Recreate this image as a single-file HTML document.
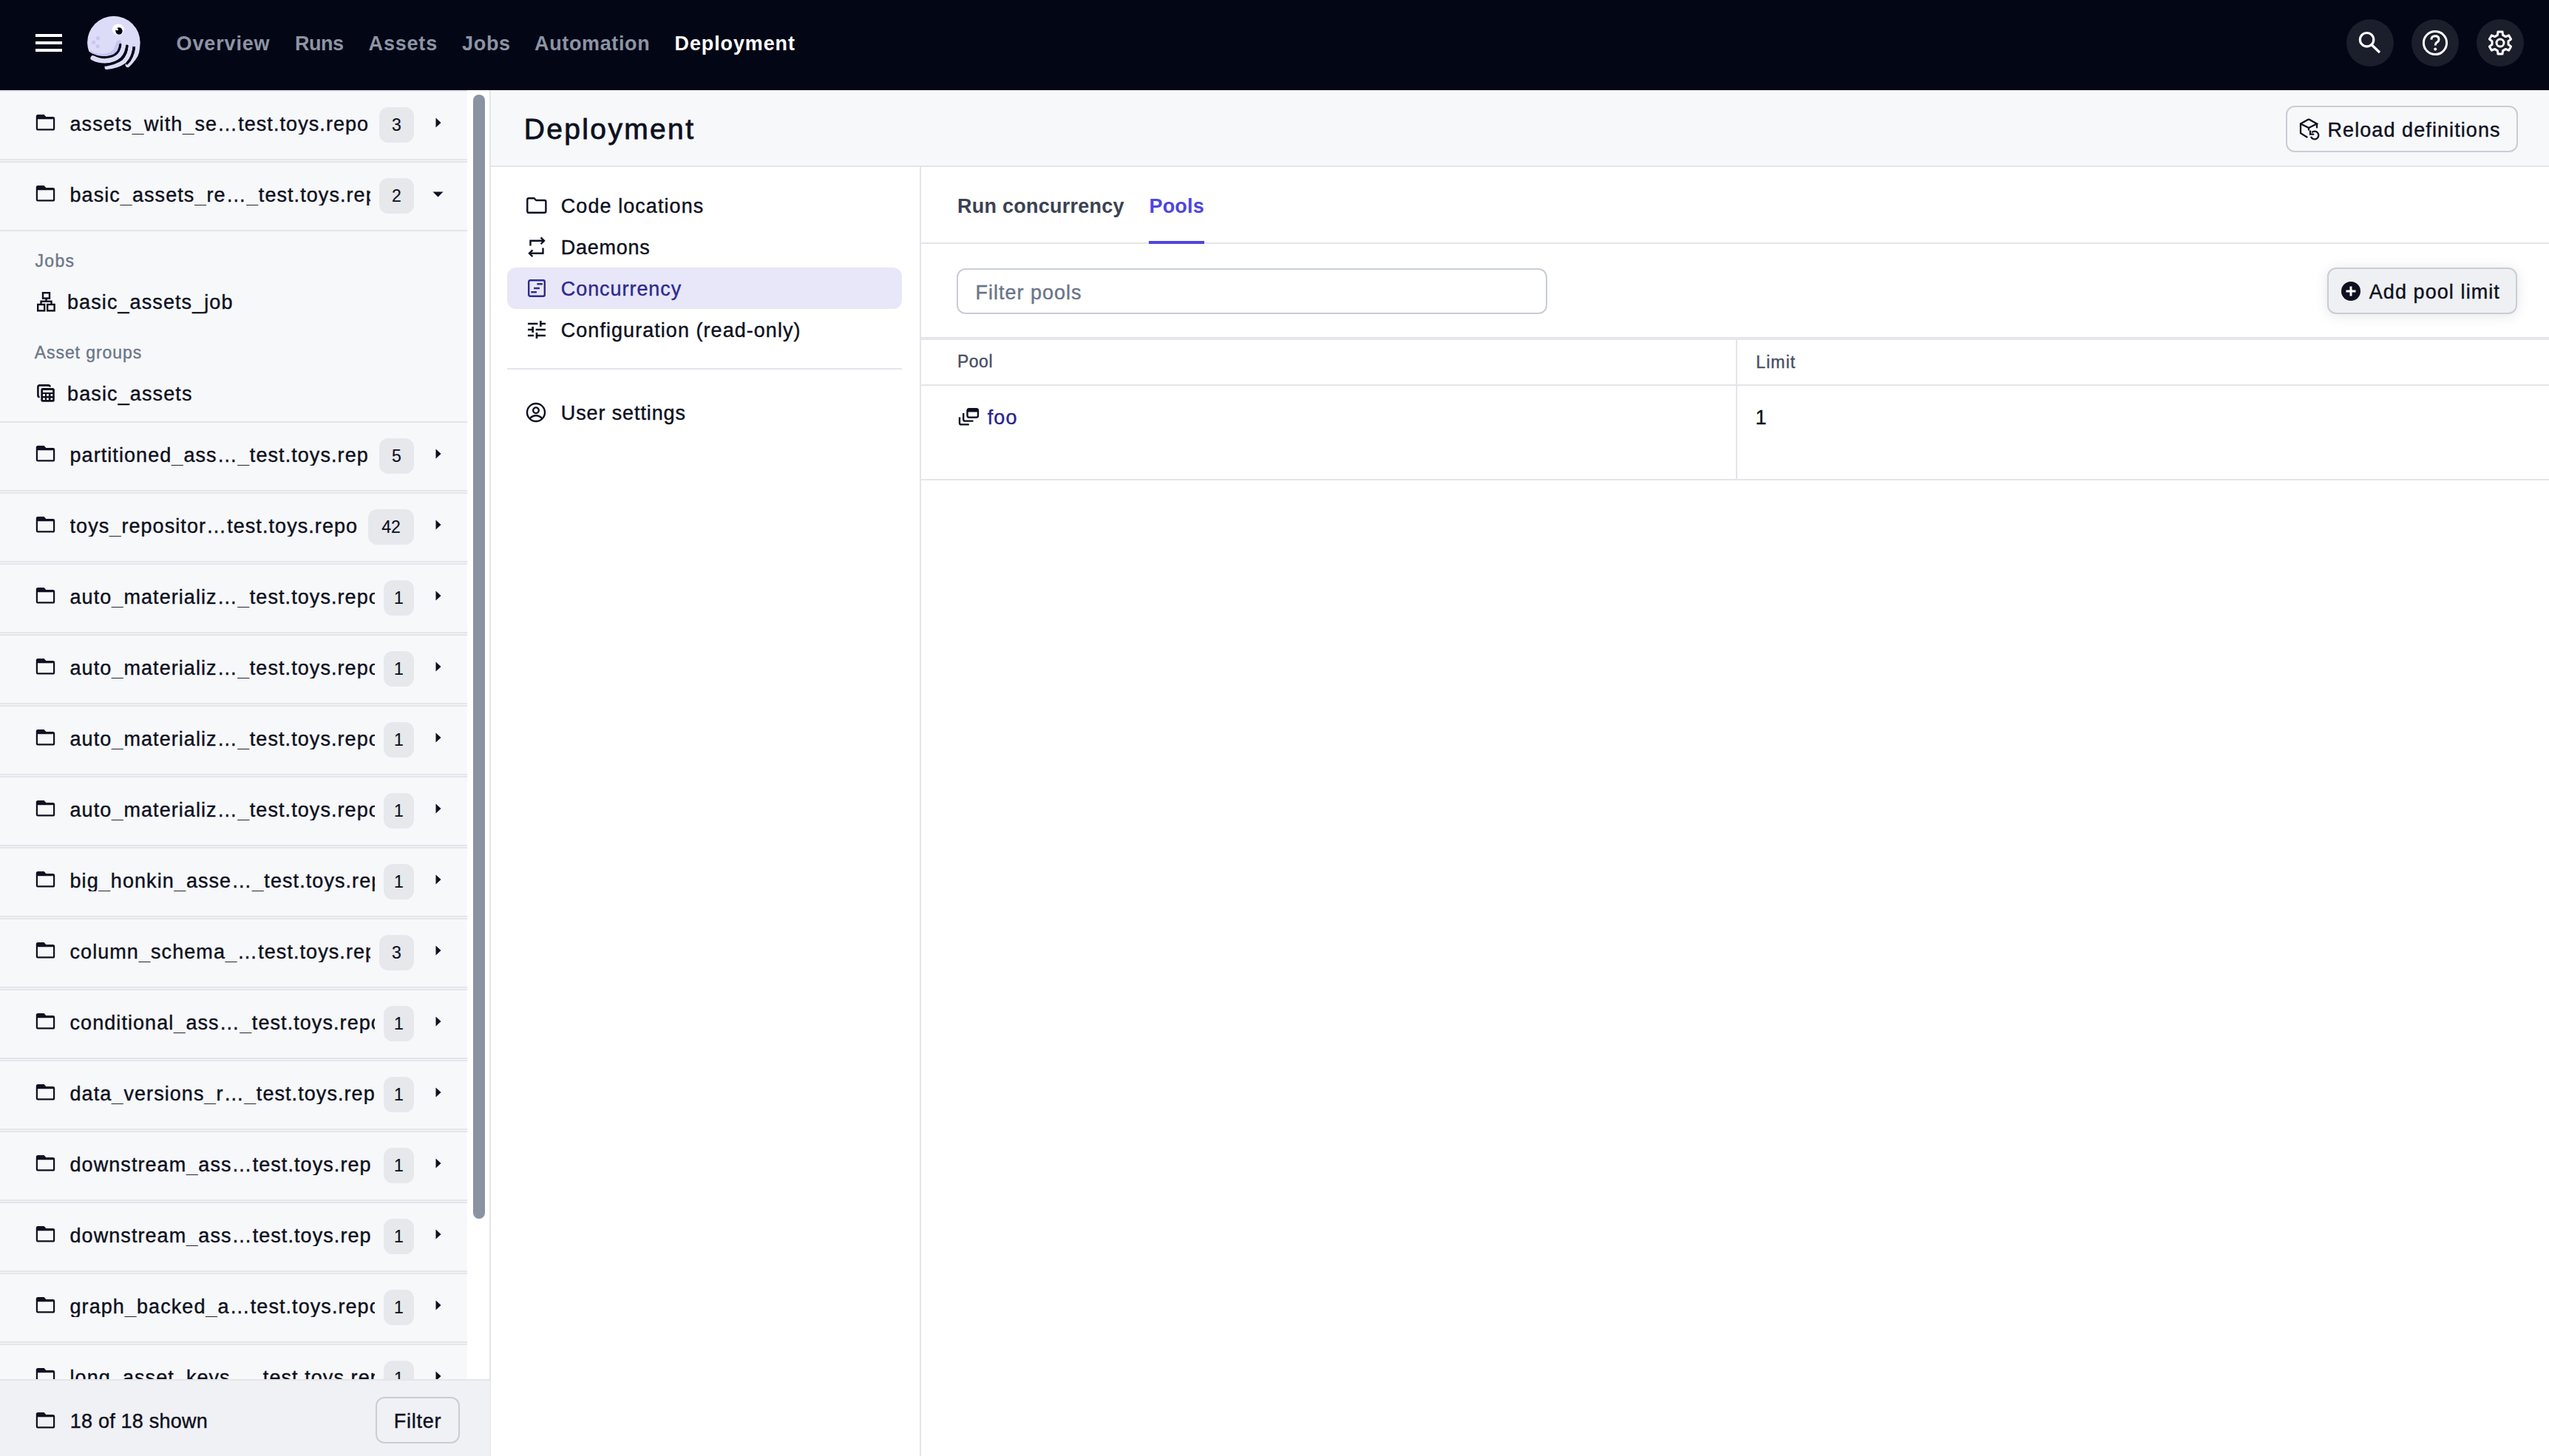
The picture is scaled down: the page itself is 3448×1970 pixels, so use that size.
<!DOCTYPE html><html><head><meta charset='utf-8'><style>
html,body{margin:0;padding:0;width:3448px;height:1970px;overflow:hidden;background:#fff;font-family:"Liberation Sans", sans-serif;}
.t{position:absolute;white-space:pre;-webkit-text-stroke:0.4px currentColor;}
.ic{position:absolute;display:block;overflow:visible;}
.b{position:absolute;}
</style></head><body>
<div class='b' style='left:0;top:0;width:3448px;height:122px;background:#030615'></div>
<div class='b' style='left:48px;top:46px;width:36px;height:4px;background:#fff'></div>
<div class='b' style='left:48px;top:56px;width:36px;height:4px;background:#fff'></div>
<div class='b' style='left:48px;top:66px;width:36px;height:4px;background:#fff'></div>
<svg class='ic' style='left:112px;top:16px' width='84' height='84' viewBox='0 0 84 84'>
<defs><clipPath id='hc'><path d='M0 0H84V47 L69.2 47 L60 45 L50.8 43.5 Q49.5 52 43 56.5 Q35 60.5 26 59.8 Q19 59.2 12 56 L0 48Z'/></clipPath></defs>
<circle cx='41.85' cy='41.55' r='35.75' fill='#dddcf8' clip-path='url(#hc)'/>
<path d='M9 51 Q16 57 26 57 Q37 57 42 50 Q44 44 46 40 Q48 37.5 51 38.5 Q53 40 52 45 Q49 57 38 62 Q26 66 14 59Z' fill='#c7c4f2' clip-path='url(#hc)'/>
<circle cx='20.5' cy='35.5' r='2.6' fill='#c9c6f3'/><circle cx='14.7' cy='41.3' r='2.6' fill='#c9c6f3'/><circle cx='20.2' cy='46.7' r='2.6' fill='#c9c6f3'/>
<ellipse cx='47.9' cy='23.8' rx='8' ry='7.3' fill='#fff'/><circle cx='49' cy='26' r='4.7' fill='#030615'/><circle cx='46.4' cy='23.8' r='1.5' fill='#fff'/>
<path d='M55.5 42 Q54.5 54 49 59.4 Q42 66 30 66.4 Q21 66.4 13.6 62.4' stroke='#dddcf8' stroke-width='6.4' fill='none' stroke-linecap='round'/>
<path d='M64.6 44 Q64.5 58 56 67 Q46 74 32.6 75' stroke='#dddcf8' stroke-width='6.2' fill='none' stroke-linecap='round'/>
<path d='M74 40 Q75 56 69.2 62.3 Q65 68 60.8 72' stroke='#dddcf8' stroke-width='6.2' fill='none' stroke-linecap='round'/>
<path d='M50.8 44.4 Q49.5 54 44 57.4' stroke='#030615' stroke-width='3.2' fill='none' stroke-linecap='round'/>
<path d='M60 46.2 Q59 58 52 64.5 Q44 70 31 72.1' stroke='#030615' stroke-width='3.2' fill='none' stroke-linecap='round'/>
<path d='M69.2 48.5 Q68 62 59.8 69.8' stroke='#030615' stroke-width='3.2' fill='none' stroke-linecap='round'/>
</svg>
<div class='b' style='left:3174px;top:26px;width:64px;height:64px;border-radius:50%;background:#1b1e2b'></div>
<div class='b' style='left:3262px;top:26px;width:64px;height:64px;border-radius:50%;background:#1b1e2b'></div>
<div class='b' style='left:3350px;top:26px;width:64px;height:64px;border-radius:50%;background:#1b1e2b'></div>
<svg class='ic' style='left:3186px;top:38px' width='40' height='40' viewBox='0 0 40 40'><circle cx='15.6' cy='15.7' r='9.2' stroke='#fff' stroke-width='3.2' fill='none'/><path d='M22.5 23 L33 33' stroke='#fff' stroke-width='3.4'/></svg>
<svg class='ic' style='left:3274px;top:38px' width='40' height='40' viewBox='0 0 40 40'><circle cx='20' cy='20' r='15.6' stroke='#fff' stroke-width='3' fill='none'/><path d='M14.8 15.6 Q15 10.8 20 10.8 Q25 10.8 25 15.2 Q25 18 22 19.6 Q20.2 20.8 20.2 23.4' stroke='#fff' stroke-width='3' fill='none'/><circle cx='20.2' cy='28.4' r='2' fill='#fff'/></svg>
<svg class='ic' style='left:3362px;top:38px' width='40' height='40' viewBox='0 0 40 40'><path d='M16.43 9.38 L16.96 4.90 L23.04 4.90 L23.57 9.38 L27.41 11.60 L31.55 9.82 L34.60 15.09 L30.98 17.79 L30.98 22.21 L34.60 24.91 L31.55 30.18 L27.41 28.40 L23.57 30.62 L23.04 35.10 L16.96 35.10 L16.43 30.62 L12.59 28.40 L8.45 30.18 L5.40 24.91 L9.02 22.21 L9.02 17.79 L5.40 15.09 L8.45 9.82 L12.59 11.60Z' stroke='#fff' stroke-width='3' fill='none' stroke-linejoin='round'/><circle cx='20' cy='20' r='5' stroke='#fff' stroke-width='3' fill='none'/></svg>
<div class='b' style='left:0;top:122px;width:632px;height:1848px;background:#f7f8fa'></div>
<div class='b' style='left:0;top:122px;width:632px;height:2px;background:#e3e5ea'></div>
<div class='b' style='left:662px;top:122px;width:2px;height:1848px;background:#e3e5ea'></div>
<div class='b' style='left:640px;top:128px;width:16px;height:1521px;border-radius:8px;background:#8a93a2'></div>
<div class='b' style='left:0px;top:215px;width:632px;height:2px;background:#e3e5ea'></div><svg class='ic' style='left:48px;top:155px' width='27' height='22' viewBox='0 0 27 22'><path fill-rule='evenodd' fill='#0d1020' d='M0.8 2.6Q0.8 0 3.2 0H11.6L14.2 2.9H23.6Q26.2 2.9 26.2 5.4V19.2Q26.2 21.6 23.6 21.6H3.2Q0.8 21.6 0.8 19.2ZM3 6.2V19.2H24V6.2Z'/></svg><div class='t' style='left:94.5px;top:155.04px;width:406.5px;overflow:hidden;font-size:27px;line-height:27px;color:#0d1020;letter-spacing:1.07px'>assets_with_se…test.toys.repo</div><div class='b' style='left:513px;top:145px;width:47px;height:48px;border-radius:12px;background:#e7e8ec'></div><div class='t' style='left:513px;width:47px;text-align:center;top:158.43px;font-size:23px;line-height:23px;color:#0d1020;-webkit-text-stroke:0.2px currentColor'>3</div><svg class='ic' style='left:589px;top:159px' width='8' height='14' viewBox='0 0 8 14'><path d='M0.5 0.5L7.5 7L0.5 13.5Z' fill='#0d1020'/></svg><div class='b' style='left:0px;top:218px;width:632px;height:2px;background:#e3e5ea'></div><div class='b' style='left:0px;top:311px;width:632px;height:2px;background:#e3e5ea'></div><svg class='ic' style='left:48px;top:251px' width='27' height='22' viewBox='0 0 27 22'><path fill-rule='evenodd' fill='#0d1020' d='M0.8 2.6Q0.8 0 3.2 0H11.6L14.2 2.9H23.6Q26.2 2.9 26.2 5.4V19.2Q26.2 21.6 23.6 21.6H3.2Q0.8 21.6 0.8 19.2ZM3 6.2V19.2H24V6.2Z'/></svg><div class='t' style='left:94.5px;top:251.04px;width:406.5px;overflow:hidden;font-size:27px;line-height:27px;color:#0d1020;letter-spacing:1.07px'>basic_assets_re…_test.toys.repo</div><div class='b' style='left:513px;top:241px;width:47px;height:48px;border-radius:12px;background:#e7e8ec'></div><div class='t' style='left:513px;width:47px;text-align:center;top:254.43px;font-size:23px;line-height:23px;color:#0d1020;-webkit-text-stroke:0.2px currentColor'>2</div><svg class='ic' style='left:584.5px;top:258.5px' width='15' height='8' viewBox='0 0 15 8'><path d='M0.5 0.5H14.5L7.5 7.5Z' fill='#0d1020'/></svg><div class='b' style='left:0px;top:570px;width:632px;height:2px;background:#e3e5ea'></div><div class='b' style='left:0px;top:663px;width:632px;height:2px;background:#e3e5ea'></div><svg class='ic' style='left:48px;top:603px' width='27' height='22' viewBox='0 0 27 22'><path fill-rule='evenodd' fill='#0d1020' d='M0.8 2.6Q0.8 0 3.2 0H11.6L14.2 2.9H23.6Q26.2 2.9 26.2 5.4V19.2Q26.2 21.6 23.6 21.6H3.2Q0.8 21.6 0.8 19.2ZM3 6.2V19.2H24V6.2Z'/></svg><div class='t' style='left:94.5px;top:603.04px;width:406.5px;overflow:hidden;font-size:27px;line-height:27px;color:#0d1020;letter-spacing:1.07px'>partitioned_ass…_test.toys.rep</div><div class='b' style='left:513px;top:593px;width:47px;height:48px;border-radius:12px;background:#e7e8ec'></div><div class='t' style='left:513px;width:47px;text-align:center;top:606.43px;font-size:23px;line-height:23px;color:#0d1020;-webkit-text-stroke:0.2px currentColor'>5</div><svg class='ic' style='left:589px;top:607px' width='8' height='14' viewBox='0 0 8 14'><path d='M0.5 0.5L7.5 7L0.5 13.5Z' fill='#0d1020'/></svg><div class='b' style='left:0px;top:666px;width:632px;height:2px;background:#e3e5ea'></div><div class='b' style='left:0px;top:759px;width:632px;height:2px;background:#e3e5ea'></div><svg class='ic' style='left:48px;top:699px' width='27' height='22' viewBox='0 0 27 22'><path fill-rule='evenodd' fill='#0d1020' d='M0.8 2.6Q0.8 0 3.2 0H11.6L14.2 2.9H23.6Q26.2 2.9 26.2 5.4V19.2Q26.2 21.6 23.6 21.6H3.2Q0.8 21.6 0.8 19.2ZM3 6.2V19.2H24V6.2Z'/></svg><div class='t' style='left:94.5px;top:699.04px;width:391.5px;overflow:hidden;font-size:27px;line-height:27px;color:#0d1020;letter-spacing:1.07px'>toys_repositor…test.toys.repo</div><div class='b' style='left:498px;top:689px;width:62px;height:48px;border-radius:12px;background:#e7e8ec'></div><div class='t' style='left:498px;width:62px;text-align:center;top:702.43px;font-size:23px;line-height:23px;color:#0d1020;-webkit-text-stroke:0.2px currentColor'>42</div><svg class='ic' style='left:589px;top:703px' width='8' height='14' viewBox='0 0 8 14'><path d='M0.5 0.5L7.5 7L0.5 13.5Z' fill='#0d1020'/></svg><div class='b' style='left:0px;top:762px;width:632px;height:2px;background:#e3e5ea'></div><div class='b' style='left:0px;top:855px;width:632px;height:2px;background:#e3e5ea'></div><svg class='ic' style='left:48px;top:795px' width='27' height='22' viewBox='0 0 27 22'><path fill-rule='evenodd' fill='#0d1020' d='M0.8 2.6Q0.8 0 3.2 0H11.6L14.2 2.9H23.6Q26.2 2.9 26.2 5.4V19.2Q26.2 21.6 23.6 21.6H3.2Q0.8 21.6 0.8 19.2ZM3 6.2V19.2H24V6.2Z'/></svg><div class='t' style='left:94.5px;top:795.04px;width:412.5px;overflow:hidden;font-size:27px;line-height:27px;color:#0d1020;letter-spacing:1.07px'>auto_materializ…_test.toys.repo</div><div class='b' style='left:519px;top:785px;width:41px;height:48px;border-radius:12px;background:#e7e8ec'></div><div class='t' style='left:519px;width:41px;text-align:center;top:798.43px;font-size:23px;line-height:23px;color:#0d1020;-webkit-text-stroke:0.2px currentColor'>1</div><svg class='ic' style='left:589px;top:799px' width='8' height='14' viewBox='0 0 8 14'><path d='M0.5 0.5L7.5 7L0.5 13.5Z' fill='#0d1020'/></svg><div class='b' style='left:0px;top:858px;width:632px;height:2px;background:#e3e5ea'></div><div class='b' style='left:0px;top:951px;width:632px;height:2px;background:#e3e5ea'></div><svg class='ic' style='left:48px;top:891px' width='27' height='22' viewBox='0 0 27 22'><path fill-rule='evenodd' fill='#0d1020' d='M0.8 2.6Q0.8 0 3.2 0H11.6L14.2 2.9H23.6Q26.2 2.9 26.2 5.4V19.2Q26.2 21.6 23.6 21.6H3.2Q0.8 21.6 0.8 19.2ZM3 6.2V19.2H24V6.2Z'/></svg><div class='t' style='left:94.5px;top:891.04px;width:412.5px;overflow:hidden;font-size:27px;line-height:27px;color:#0d1020;letter-spacing:1.07px'>auto_materializ…_test.toys.repo</div><div class='b' style='left:519px;top:881px;width:41px;height:48px;border-radius:12px;background:#e7e8ec'></div><div class='t' style='left:519px;width:41px;text-align:center;top:894.43px;font-size:23px;line-height:23px;color:#0d1020;-webkit-text-stroke:0.2px currentColor'>1</div><svg class='ic' style='left:589px;top:895px' width='8' height='14' viewBox='0 0 8 14'><path d='M0.5 0.5L7.5 7L0.5 13.5Z' fill='#0d1020'/></svg><div class='b' style='left:0px;top:954px;width:632px;height:2px;background:#e3e5ea'></div><div class='b' style='left:0px;top:1047px;width:632px;height:2px;background:#e3e5ea'></div><svg class='ic' style='left:48px;top:987px' width='27' height='22' viewBox='0 0 27 22'><path fill-rule='evenodd' fill='#0d1020' d='M0.8 2.6Q0.8 0 3.2 0H11.6L14.2 2.9H23.6Q26.2 2.9 26.2 5.4V19.2Q26.2 21.6 23.6 21.6H3.2Q0.8 21.6 0.8 19.2ZM3 6.2V19.2H24V6.2Z'/></svg><div class='t' style='left:94.5px;top:987.04px;width:412.5px;overflow:hidden;font-size:27px;line-height:27px;color:#0d1020;letter-spacing:1.07px'>auto_materializ…_test.toys.repo</div><div class='b' style='left:519px;top:977px;width:41px;height:48px;border-radius:12px;background:#e7e8ec'></div><div class='t' style='left:519px;width:41px;text-align:center;top:990.43px;font-size:23px;line-height:23px;color:#0d1020;-webkit-text-stroke:0.2px currentColor'>1</div><svg class='ic' style='left:589px;top:991px' width='8' height='14' viewBox='0 0 8 14'><path d='M0.5 0.5L7.5 7L0.5 13.5Z' fill='#0d1020'/></svg><div class='b' style='left:0px;top:1050px;width:632px;height:2px;background:#e3e5ea'></div><div class='b' style='left:0px;top:1143px;width:632px;height:2px;background:#e3e5ea'></div><svg class='ic' style='left:48px;top:1083px' width='27' height='22' viewBox='0 0 27 22'><path fill-rule='evenodd' fill='#0d1020' d='M0.8 2.6Q0.8 0 3.2 0H11.6L14.2 2.9H23.6Q26.2 2.9 26.2 5.4V19.2Q26.2 21.6 23.6 21.6H3.2Q0.8 21.6 0.8 19.2ZM3 6.2V19.2H24V6.2Z'/></svg><div class='t' style='left:94.5px;top:1083.04px;width:412.5px;overflow:hidden;font-size:27px;line-height:27px;color:#0d1020;letter-spacing:1.07px'>auto_materializ…_test.toys.repo</div><div class='b' style='left:519px;top:1073px;width:41px;height:48px;border-radius:12px;background:#e7e8ec'></div><div class='t' style='left:519px;width:41px;text-align:center;top:1086.43px;font-size:23px;line-height:23px;color:#0d1020;-webkit-text-stroke:0.2px currentColor'>1</div><svg class='ic' style='left:589px;top:1087px' width='8' height='14' viewBox='0 0 8 14'><path d='M0.5 0.5L7.5 7L0.5 13.5Z' fill='#0d1020'/></svg><div class='b' style='left:0px;top:1146px;width:632px;height:2px;background:#e3e5ea'></div><div class='b' style='left:0px;top:1239px;width:632px;height:2px;background:#e3e5ea'></div><svg class='ic' style='left:48px;top:1179px' width='27' height='22' viewBox='0 0 27 22'><path fill-rule='evenodd' fill='#0d1020' d='M0.8 2.6Q0.8 0 3.2 0H11.6L14.2 2.9H23.6Q26.2 2.9 26.2 5.4V19.2Q26.2 21.6 23.6 21.6H3.2Q0.8 21.6 0.8 19.2ZM3 6.2V19.2H24V6.2Z'/></svg><div class='t' style='left:94.5px;top:1179.04px;width:412.5px;overflow:hidden;font-size:27px;line-height:27px;color:#0d1020;letter-spacing:1.07px'>big_honkin_asse…_test.toys.repo</div><div class='b' style='left:519px;top:1169px;width:41px;height:48px;border-radius:12px;background:#e7e8ec'></div><div class='t' style='left:519px;width:41px;text-align:center;top:1182.43px;font-size:23px;line-height:23px;color:#0d1020;-webkit-text-stroke:0.2px currentColor'>1</div><svg class='ic' style='left:589px;top:1183px' width='8' height='14' viewBox='0 0 8 14'><path d='M0.5 0.5L7.5 7L0.5 13.5Z' fill='#0d1020'/></svg><div class='b' style='left:0px;top:1242px;width:632px;height:2px;background:#e3e5ea'></div><div class='b' style='left:0px;top:1335px;width:632px;height:2px;background:#e3e5ea'></div><svg class='ic' style='left:48px;top:1275px' width='27' height='22' viewBox='0 0 27 22'><path fill-rule='evenodd' fill='#0d1020' d='M0.8 2.6Q0.8 0 3.2 0H11.6L14.2 2.9H23.6Q26.2 2.9 26.2 5.4V19.2Q26.2 21.6 23.6 21.6H3.2Q0.8 21.6 0.8 19.2ZM3 6.2V19.2H24V6.2Z'/></svg><div class='t' style='left:94.5px;top:1275.04px;width:406.5px;overflow:hidden;font-size:27px;line-height:27px;color:#0d1020;letter-spacing:1.07px'>column_schema_…test.toys.repo</div><div class='b' style='left:513px;top:1265px;width:47px;height:48px;border-radius:12px;background:#e7e8ec'></div><div class='t' style='left:513px;width:47px;text-align:center;top:1278.43px;font-size:23px;line-height:23px;color:#0d1020;-webkit-text-stroke:0.2px currentColor'>3</div><svg class='ic' style='left:589px;top:1279px' width='8' height='14' viewBox='0 0 8 14'><path d='M0.5 0.5L7.5 7L0.5 13.5Z' fill='#0d1020'/></svg><div class='b' style='left:0px;top:1338px;width:632px;height:2px;background:#e3e5ea'></div><div class='b' style='left:0px;top:1431px;width:632px;height:2px;background:#e3e5ea'></div><svg class='ic' style='left:48px;top:1371px' width='27' height='22' viewBox='0 0 27 22'><path fill-rule='evenodd' fill='#0d1020' d='M0.8 2.6Q0.8 0 3.2 0H11.6L14.2 2.9H23.6Q26.2 2.9 26.2 5.4V19.2Q26.2 21.6 23.6 21.6H3.2Q0.8 21.6 0.8 19.2ZM3 6.2V19.2H24V6.2Z'/></svg><div class='t' style='left:94.5px;top:1371.04px;width:412.5px;overflow:hidden;font-size:27px;line-height:27px;color:#0d1020;letter-spacing:1.07px'>conditional_ass…_test.toys.repo</div><div class='b' style='left:519px;top:1361px;width:41px;height:48px;border-radius:12px;background:#e7e8ec'></div><div class='t' style='left:519px;width:41px;text-align:center;top:1374.43px;font-size:23px;line-height:23px;color:#0d1020;-webkit-text-stroke:0.2px currentColor'>1</div><svg class='ic' style='left:589px;top:1375px' width='8' height='14' viewBox='0 0 8 14'><path d='M0.5 0.5L7.5 7L0.5 13.5Z' fill='#0d1020'/></svg><div class='b' style='left:0px;top:1434px;width:632px;height:2px;background:#e3e5ea'></div><div class='b' style='left:0px;top:1527px;width:632px;height:2px;background:#e3e5ea'></div><svg class='ic' style='left:48px;top:1467px' width='27' height='22' viewBox='0 0 27 22'><path fill-rule='evenodd' fill='#0d1020' d='M0.8 2.6Q0.8 0 3.2 0H11.6L14.2 2.9H23.6Q26.2 2.9 26.2 5.4V19.2Q26.2 21.6 23.6 21.6H3.2Q0.8 21.6 0.8 19.2ZM3 6.2V19.2H24V6.2Z'/></svg><div class='t' style='left:94.5px;top:1467.04px;width:412.5px;overflow:hidden;font-size:27px;line-height:27px;color:#0d1020;letter-spacing:1.07px'>data_versions_r…_test.toys.repo</div><div class='b' style='left:519px;top:1457px;width:41px;height:48px;border-radius:12px;background:#e7e8ec'></div><div class='t' style='left:519px;width:41px;text-align:center;top:1470.43px;font-size:23px;line-height:23px;color:#0d1020;-webkit-text-stroke:0.2px currentColor'>1</div><svg class='ic' style='left:589px;top:1471px' width='8' height='14' viewBox='0 0 8 14'><path d='M0.5 0.5L7.5 7L0.5 13.5Z' fill='#0d1020'/></svg><div class='b' style='left:0px;top:1530px;width:632px;height:2px;background:#e3e5ea'></div><div class='b' style='left:0px;top:1623px;width:632px;height:2px;background:#e3e5ea'></div><svg class='ic' style='left:48px;top:1563px' width='27' height='22' viewBox='0 0 27 22'><path fill-rule='evenodd' fill='#0d1020' d='M0.8 2.6Q0.8 0 3.2 0H11.6L14.2 2.9H23.6Q26.2 2.9 26.2 5.4V19.2Q26.2 21.6 23.6 21.6H3.2Q0.8 21.6 0.8 19.2ZM3 6.2V19.2H24V6.2Z'/></svg><div class='t' style='left:94.5px;top:1563.04px;width:412.5px;overflow:hidden;font-size:27px;line-height:27px;color:#0d1020;letter-spacing:1.07px'>downstream_ass…test.toys.rep</div><div class='b' style='left:519px;top:1553px;width:41px;height:48px;border-radius:12px;background:#e7e8ec'></div><div class='t' style='left:519px;width:41px;text-align:center;top:1566.43px;font-size:23px;line-height:23px;color:#0d1020;-webkit-text-stroke:0.2px currentColor'>1</div><svg class='ic' style='left:589px;top:1567px' width='8' height='14' viewBox='0 0 8 14'><path d='M0.5 0.5L7.5 7L0.5 13.5Z' fill='#0d1020'/></svg><div class='b' style='left:0px;top:1626px;width:632px;height:2px;background:#e3e5ea'></div><div class='b' style='left:0px;top:1719px;width:632px;height:2px;background:#e3e5ea'></div><svg class='ic' style='left:48px;top:1659px' width='27' height='22' viewBox='0 0 27 22'><path fill-rule='evenodd' fill='#0d1020' d='M0.8 2.6Q0.8 0 3.2 0H11.6L14.2 2.9H23.6Q26.2 2.9 26.2 5.4V19.2Q26.2 21.6 23.6 21.6H3.2Q0.8 21.6 0.8 19.2ZM3 6.2V19.2H24V6.2Z'/></svg><div class='t' style='left:94.5px;top:1659.04px;width:412.5px;overflow:hidden;font-size:27px;line-height:27px;color:#0d1020;letter-spacing:1.07px'>downstream_ass…test.toys.rep</div><div class='b' style='left:519px;top:1649px;width:41px;height:48px;border-radius:12px;background:#e7e8ec'></div><div class='t' style='left:519px;width:41px;text-align:center;top:1662.43px;font-size:23px;line-height:23px;color:#0d1020;-webkit-text-stroke:0.2px currentColor'>1</div><svg class='ic' style='left:589px;top:1663px' width='8' height='14' viewBox='0 0 8 14'><path d='M0.5 0.5L7.5 7L0.5 13.5Z' fill='#0d1020'/></svg><div class='b' style='left:0px;top:1722px;width:632px;height:2px;background:#e3e5ea'></div><div class='b' style='left:0px;top:1815px;width:632px;height:2px;background:#e3e5ea'></div><svg class='ic' style='left:48px;top:1755px' width='27' height='22' viewBox='0 0 27 22'><path fill-rule='evenodd' fill='#0d1020' d='M0.8 2.6Q0.8 0 3.2 0H11.6L14.2 2.9H23.6Q26.2 2.9 26.2 5.4V19.2Q26.2 21.6 23.6 21.6H3.2Q0.8 21.6 0.8 19.2ZM3 6.2V19.2H24V6.2Z'/></svg><div class='t' style='left:94.5px;top:1755.04px;width:412.5px;overflow:hidden;font-size:27px;line-height:27px;color:#0d1020;letter-spacing:1.07px'>graph_backed_a…test.toys.repo</div><div class='b' style='left:519px;top:1745px;width:41px;height:48px;border-radius:12px;background:#e7e8ec'></div><div class='t' style='left:519px;width:41px;text-align:center;top:1758.43px;font-size:23px;line-height:23px;color:#0d1020;-webkit-text-stroke:0.2px currentColor'>1</div><svg class='ic' style='left:589px;top:1759px' width='8' height='14' viewBox='0 0 8 14'><path d='M0.5 0.5L7.5 7L0.5 13.5Z' fill='#0d1020'/></svg><div class='b' style='left:0px;top:1818px;width:632px;height:2px;background:#e3e5ea'></div><div class='b' style='left:0px;top:1911px;width:632px;height:2px;background:#e3e5ea'></div><svg class='ic' style='left:48px;top:1851px' width='27' height='22' viewBox='0 0 27 22'><path fill-rule='evenodd' fill='#0d1020' d='M0.8 2.6Q0.8 0 3.2 0H11.6L14.2 2.9H23.6Q26.2 2.9 26.2 5.4V19.2Q26.2 21.6 23.6 21.6H3.2Q0.8 21.6 0.8 19.2ZM3 6.2V19.2H24V6.2Z'/></svg><div class='t' style='left:94.5px;top:1851.04px;width:412.5px;overflow:hidden;font-size:27px;line-height:27px;color:#0d1020;letter-spacing:1.07px'>long_asset_keys…_test.toys.repo</div><div class='b' style='left:519px;top:1841px;width:41px;height:48px;border-radius:12px;background:#e7e8ec'></div><div class='t' style='left:519px;width:41px;text-align:center;top:1854.43px;font-size:23px;line-height:23px;color:#0d1020;-webkit-text-stroke:0.2px currentColor'>1</div><svg class='ic' style='left:589px;top:1855px' width='8' height='14' viewBox='0 0 8 14'><path d='M0.5 0.5L7.5 7L0.5 13.5Z' fill='#0d1020'/></svg>
<svg class='ic' style='left:50px;top:395px' width='25' height='27' viewBox='0 0 25 27'><g fill='none' stroke='#0d1020' stroke-width='2.4'><rect x='8' y='1.2' width='9' height='7.4'/><path d='M12.5 8.6V12.8M5.5 17V12.8H19.5V17'/><rect x='1.2' y='17' width='9' height='8.4'/><rect x='14.2' y='17' width='9.4' height='8.4'/></g></svg>
<svg class='ic' style='left:50px;top:520px' width='25' height='25' viewBox='0 0 25 25'><path d='M17.6 3.6Q17.6 1.4 15.6 1.4H3.6Q1.4 1.4 1.4 3.6V15Q1.4 17.1 3.6 17.1' fill='none' stroke='#0d1020' stroke-width='2.6'/><path fill-rule='evenodd' fill='#0d1020' d='M5.3 7.6Q5.3 5.1 7.8 5.1H21.3Q23.8 5.1 23.8 7.6V21.2Q23.8 23.7 21.3 23.7H7.8Q5.3 23.7 5.3 21.2ZM8 8V10.9H21.2V8ZM8 12.9V15.9H10.9V12.9ZM13 12.9V15.9H15.9V12.9ZM18.5 12.9V15.9H21.2V12.9ZM8 18.6V21.1H10.9V18.6ZM13 18.6V21.1H15.9V18.6ZM18.5 18.6V21.1H21.2V18.6Z'/></svg>
<div class='b' style='left:0;top:1866px;width:663px;height:104px;background:#f0f1f4'></div>
<div class='b' style='left:0px;top:1866px;width:663px;height:2px;background:#e3e5ea'></div>
<svg class='ic' style='left:48px;top:1911px' width='27' height='22' viewBox='0 0 27 22'><path fill-rule='evenodd' fill='#0d1020' d='M0.8 2.6Q0.8 0 3.2 0H11.6L14.2 2.9H23.6Q26.2 2.9 26.2 5.4V19.2Q26.2 21.6 23.6 21.6H3.2Q0.8 21.6 0.8 19.2ZM3 6.2V19.2H24V6.2Z'/></svg>
<div class='b' style='left:507.5px;top:1890px;width:110px;height:59px;border:2px solid #c9cdd5;border-radius:12px'></div>
<div class='b' style='left:664px;top:122px;width:2784px;height:102px;background:#f7f8fa'></div>
<div class='b' style='left:664px;top:224px;width:2784px;height:2px;background:#e3e5ea'></div>
<div class='b' style='left:3091.5px;top:142.5px;width:310px;height:59px;border:2px solid #c9cdd5;border-radius:12px'></div>
<svg class='ic' style='left:3110px;top:159px' width='30' height='32' viewBox='0 0 30 32'><g fill='none' stroke='#0d1020' stroke-width='2.3' stroke-linejoin='miter'><path d='M13 2.3L2 8.5V21.2L11.3 27'/><path d='M2 8.5L13 14L24 8.5L13 2.3'/><path d='M13 14V17.5'/><path d='M24 8.5V14.4'/><path d='M17.2 20.3A5.3 5.3 0 1 1 16 25.8'/><path d='M15 17.6V22.6H20.2'/></g></svg>
<div class='b' style='left:1244px;top:226px;width:2px;height:1744px;background:#e3e5ea'></div>
<svg class='ic' style='left:712px;top:267px' width='28' height='22' viewBox='0 0 28 22'><path d='M1.3 3.2Q1.3 1.2 3.3 1.2H10.6L13.2 4H24.3Q26.4 4 26.4 6V18.8Q26.4 20.8 24.3 20.8H3.3Q1.3 20.8 1.3 18.8Z' fill='none' stroke='#0d1020' stroke-width='2.4' stroke-linejoin='round'/></svg>
<svg class='ic' style='left:712px;top:318px' width='28' height='32' viewBox='0 0 28 32'><g fill='none' stroke='#0d1020' stroke-width='2.4'><path d='M5.5 14.4V7.8H23.5'/><path d='M19.6 3.4L24 7.8L19.6 12.2'/><path d='M22.5 17.4V24.8H4'/><path d='M8.4 20.4L4 24.8L8.4 29.2'/></g></svg>
<div class='b' style='left:686px;top:362px;width:534px;height:55.5px;border-radius:12px;background:#e8e7f9'></div>
<svg class='ic' style='left:713px;top:377px' width='26' height='26' viewBox='0 0 26 26'><g fill='none' stroke='#2e2b8f' stroke-width='2.4'><rect x='2.2' y='2.2' width='21.6' height='21.6' rx='2'/><path d='M13.4 7.3H20.9M9.1 13H17M5.3 18.3H12.9'/></g></svg>
<svg class='ic' style='left:710px;top:430px' width='32' height='32' viewBox='0 0 32 32'><g transform='scale(1.3333)'><path fill='#0d1020' d='M3 17v2h6v-2H3zM3 5v2h10V5H3zm10 16v-2h8v-2h-8v-2h-2v6h2zM7 9v2H3v2h4v2h2V9H7zm14 4v-2H11v2h10zm-6-4h2V7h4V5h-4V3h-2v6z'/></g></svg>
<div class='b' style='left:686px;top:498px;width:534px;height:2px;background:#e3e5ea'></div>
<svg class='ic' style='left:711px;top:544px' width='28' height='28' viewBox='0 0 28 28'><g fill='none' stroke='#0d1020' stroke-width='2.4'><circle cx='14' cy='14' r='12'/><circle cx='14' cy='11.2' r='3.8'/><path d='M5.6 22.4Q9 18.2 14 18.2Q19 18.2 22.4 22.4'/></g></svg>
<div class='b' style='left:1246px;top:328px;width:2202px;height:2px;background:#e3e5ea'></div>
<div class='b' style='left:1554px;top:325.5px;width:75px;height:4.5px;background:#4f45e0'></div>
<div class='b' style='left:1294px;top:362.5px;width:795px;height:58.5px;border:2px solid #c9cdd5;border-radius:12px;background:#fff'></div>
<div class='b' style='left:3148.4px;top:362.3px;width:253px;height:59px;border:2px solid #c9cdd5;border-radius:12px;background:#eff0f3;box-shadow:0 2px 18px rgba(0,0,0,0.10)'></div>
<svg class='ic' style='left:3167px;top:381px' width='26' height='26' viewBox='0 0 26 26'><circle cx='13' cy='13' r='13' fill='#0d1020'/><path d='M13 6.5V19.5M6.5 13H19.5' stroke='#fff' stroke-width='3'/></svg>
<div class='b' style='left:1246px;top:456px;width:2202px;height:4px;background:#e5e7eb'></div>
<div class='b' style='left:1246px;top:520px;width:2202px;height:2px;background:#e3e5ea'></div>
<div class='b' style='left:1246px;top:648px;width:2202px;height:2px;background:#e3e5ea'></div>
<div class='b' style='left:2348px;top:458px;width:2px;height:191px;background:#e3e5ea'></div>
<svg class='ic' style='left:1296px;top:551px' width='30' height='26' viewBox='0 0 30 26'><g fill='none' stroke='#0d1020' stroke-width='2.4'><rect x='12.5' y='2.2' width='14.5' height='11.6' rx='2.5'/><path d='M7.2 8V16.4Q7.2 18.6 9.4 18.6H20.5'/><path d='M2 13.4V21.2Q2 23.4 4.2 23.4H14.8'/></g><rect x='12' y='1.5' width='15.5' height='5' rx='2' fill='#0d1020'/></svg>
<div class='t' style='left:238.60px;top:46.14px;font-size:27px;line-height:27px;font-weight:700;color:#8c94a5;letter-spacing:0.846px;-webkit-text-stroke:0;'>Overview</div>
<div class='t' style='left:399.00px;top:46.14px;font-size:27px;line-height:27px;font-weight:700;color:#8c94a5;letter-spacing:-0.500px;-webkit-text-stroke:0;'>Runs</div>
<div class='t' style='left:498.60px;top:46.14px;font-size:27px;line-height:27px;font-weight:700;color:#8c94a5;letter-spacing:0.807px;-webkit-text-stroke:0;'>Assets</div>
<div class='t' style='left:625.10px;top:46.14px;font-size:27px;line-height:27px;font-weight:700;color:#8c94a5;letter-spacing:0.656px;-webkit-text-stroke:0;'>Jobs</div>
<div class='t' style='left:723.00px;top:46.14px;font-size:27px;line-height:27px;font-weight:700;color:#8c94a5;letter-spacing:0.641px;-webkit-text-stroke:0;'>Automation</div>
<div class='t' style='left:912.50px;top:46.14px;font-size:27px;line-height:27px;font-weight:700;color:#ffffff;letter-spacing:0.885px;-webkit-text-stroke:0;'>Deployment</div>
<div class='t' style='left:708.75px;top:155.09px;font-size:39px;line-height:39px;font-weight:400;color:#0d1020;letter-spacing:2.349px;-webkit-text-stroke:0.8px currentColor;'>Deployment</div>
<div class='t' style='left:3148.50px;top:162.54px;font-size:27px;line-height:27px;font-weight:400;color:#0d1020;letter-spacing:1.079px;'>Reload definitions</div>
<div class='t' style='left:758.75px;top:266.04px;font-size:27px;line-height:27px;font-weight:400;color:#0d1020;letter-spacing:1.067px;'>Code locations</div>
<div class='t' style='left:758.75px;top:321.79px;font-size:27px;line-height:27px;font-weight:400;color:#0d1020;letter-spacing:0.740px;'>Daemons</div>
<div class='t' style='left:758.75px;top:377.54px;font-size:27px;line-height:27px;font-weight:400;color:#2e2b8f;letter-spacing:0.944px;'>Concurrency</div>
<div class='t' style='left:758.75px;top:433.54px;font-size:27px;line-height:27px;font-weight:400;color:#0d1020;letter-spacing:1.046px;'>Configuration (read-only)</div>
<div class='t' style='left:758.75px;top:546.04px;font-size:27px;line-height:27px;font-weight:400;color:#0d1020;letter-spacing:0.891px;'>User settings</div>
<div class='t' style='left:1295.00px;top:266.04px;font-size:27px;line-height:27px;font-weight:700;color:#3b4252;letter-spacing:0.246px;-webkit-text-stroke:0;'>Run concurrency</div>
<div class='t' style='left:1554.50px;top:266.04px;font-size:27px;line-height:27px;font-weight:700;color:#4f45e0;letter-spacing:0.184px;-webkit-text-stroke:0;'>Pools</div>
<div class='t' style='left:1319.50px;top:382.54px;font-size:27px;line-height:27px;font-weight:400;color:#6a7588;letter-spacing:0.996px;'>Filter pools</div>
<div class='t' style='left:3204.70px;top:382.24px;font-size:27px;line-height:27px;font-weight:400;color:#0d1020;letter-spacing:1.085px;'>Add pool limit</div>
<div class='t' style='left:1295.00px;top:478.43px;font-size:23px;line-height:23px;font-weight:400;color:#475063;letter-spacing:0.484px;'>Pool</div>
<div class='t' style='left:2375.25px;top:478.93px;font-size:23px;line-height:23px;font-weight:400;color:#475063;letter-spacing:1.109px;'>Limit</div>
<div class='t' style='left:1335.75px;top:551.79px;font-size:27px;line-height:27px;font-weight:400;color:#27238f;letter-spacing:1.102px;'>foo</div>
<div class='t' style='left:2374.50px;top:551.79px;font-size:27px;line-height:27px;font-weight:400;color:#0d1020;letter-spacing:0.000px;'>1</div>
<div class='t' style='left:47.50px;top:342.43px;font-size:23px;line-height:23px;font-weight:400;color:#6b778a;letter-spacing:1.302px;'>Jobs</div>
<div class='t' style='left:91.00px;top:396.04px;font-size:27px;line-height:27px;font-weight:400;color:#0d1020;letter-spacing:1.091px;'>basic_assets_job</div>
<div class='t' style='left:46.75px;top:466.43px;font-size:23px;line-height:23px;font-weight:400;color:#6b778a;letter-spacing:0.932px;'>Asset groups</div>
<div class='t' style='left:91.00px;top:520.04px;font-size:27px;line-height:27px;font-weight:400;color:#0d1020;letter-spacing:1.128px;'>basic_assets</div>
<div class='t' style='left:94.75px;top:1910.04px;font-size:27px;line-height:27px;font-weight:400;color:#0d1020;letter-spacing:0.220px;'>18 of 18 shown</div>
<div class='t' style='left:532.80px;top:1910.34px;font-size:27px;line-height:27px;font-weight:400;color:#0d1020;letter-spacing:0.740px;'>Filter</div>
</body></html>
